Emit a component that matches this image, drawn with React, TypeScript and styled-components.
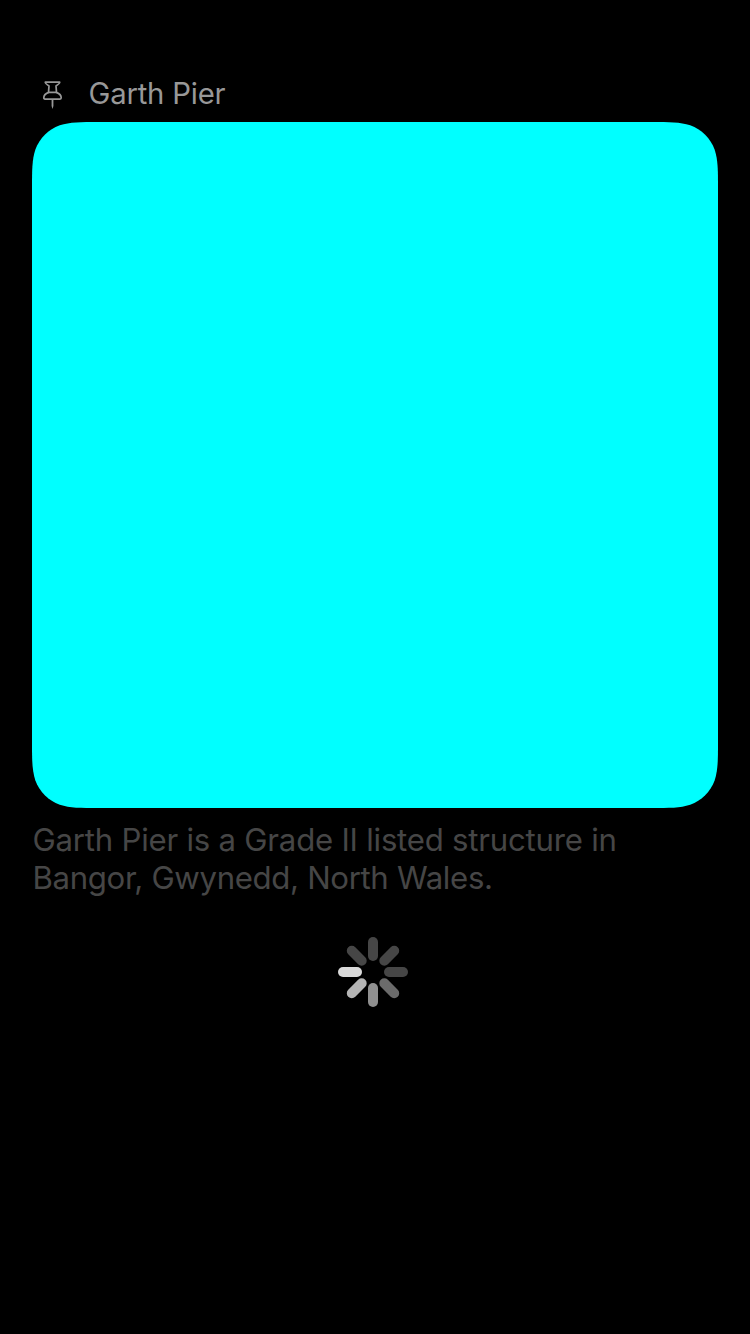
import React from "react";
import styled, { createGlobalStyle } from "styled-components";

const GlobalStyle = createGlobalStyle`
  * { box-sizing: border-box; }
  html, body { margin: 0; background: #000; }
`;

const Screen = styled.main`
  display: flex;
  flex-direction: column;
  width: 750px;
  height: 1334px;
  padding: 72px 32px 0;
  background: #000;
  font-family: Inter, "Liberation Sans", sans-serif;
  overflow: hidden;
`;

const Header = styled.header`
  display: flex;
  align-items: center;
  height: 42px;
  padding-left: 10px;
  gap: 24.5px;
  color: #989898;
`;

const PinIcon = styled.svg`
  width: 22px;
  height: 30px;
  margin-top: 3px;
  fill: none;
  stroke: currentColor;
  stroke-width: 1.7;
  stroke-linecap: round;
  stroke-linejoin: round;
`;

const Title = styled.h1`
  margin: 1px 0 0;
  font-size: 29.3px;
  font-weight: 400;
  line-height: 36px;
  letter-spacing: -0.2px;
`;

const Card = styled.div`
  flex: none;
  width: 686px;
  height: 686px;
  margin-top: 8px;
  background: #00ffff;
  clip-path: path("${({ $radius }: { $radius: number }) => squircle(686, $radius)}");
`;

const Description = styled.p`
  margin: 13px 0 0 0.5px;
  color: #464646;
  font-size: 31.2px;
  line-height: 38px;
  white-space: nowrap;
`;

const Line = styled.span<{ $tracking: number }>`
  display: block;
  letter-spacing: ${({ $tracking }) => $tracking}px;
`;

const Spinner = styled.svg`
  flex: none;
  width: 70px;
  height: 70px;
  margin: 40px 0 0 306px;
`;

// Rounded square whose corners ease gradually into the straight edges.
function squircle(size: number, r: number) {
  const a = 1.5287 * r;
  const b = 1.0885 * r;
  const c = 0.8684 * r;
  const d = 0.6315 * r;
  const e = 0.3728 * r;
  const f = 0.1691 * r;
  const g = 0.0749 * r;
  const s = size;
  return [
    `M${a} 0H${s - a}`,
    `C${s - b} 0 ${s - c} 0 ${s - d} ${g}`,
    `C${s - e} ${f} ${s - f} ${e} ${s - g} ${d}`,
    `C${s} ${c} ${s} ${b} ${s} ${a}V${s - a}`,
    `C${s} ${s - b} ${s} ${s - c} ${s - g} ${s - d}`,
    `C${s - f} ${s - e} ${s - e} ${s - f} ${s - d} ${s - g}`,
    `C${s - c} ${s} ${s - b} ${s} ${s - a} ${s}H${a}`,
    `C${b} ${s} ${c} ${s} ${d} ${s - g}`,
    `C${e} ${s - f} ${f} ${s - e} ${g} ${s - d}`,
    `C0 ${s - c} 0 ${s - b} 0 ${s - a}V${a}`,
    `C0 ${b} 0 ${c} ${g} ${d}`,
    `C${f} ${e} ${e} ${f} ${d} ${g}`,
    `C${c} 0 ${b} 0 ${a} 0Z`,
  ].join("");
}

// Clockwise from the top.
const spokes = ["#464646", "#464646", "#464646", "#6b6b6b", "#909090", "#b5b5b5", "#dadada", "#464646"];

export default function App() {
  return (
    <>
      <GlobalStyle />
      <Screen>
        <Header>
          <PinIcon viewBox="0 0 22 30" aria-hidden="true">
            <path d="M3.3 2.2H17.7C18.2 3.3 15.8 4.8 14 5.9L14.5 12.4C17.3 13.5 19.2 15.6 19.2 17.8Q19.2 19.1 18 19.1H3Q1.8 19.1 1.8 17.8C1.8 15.6 3.7 13.5 6.5 12.4L7 5.9C5.2 4.8 2.8 3.3 3.3 2.2Z" />
            <path d="M6.5 12.4H14.5" />
            <path d="M9.6 19H11.4V26L10.5 29L9.6 26Z" fill="currentColor" stroke="none" />
          </PinIcon>
          <Title>Garth Pier</Title>
        </Header>
        <Card $radius={44} />
        <Description>
          <Line $tracking={-0.24}>Garth Pier is a Grade II listed structure in</Line>
          <Line $tracking={-0.35}>Bangor, Gwynedd, North Wales.</Line>
        </Description>
        <Spinner viewBox="0 0 70 70" role="progressbar" aria-label="Loading">
          {spokes.map((color, i) => (
            <rect key={i} x="30" y="0" width="10" height="24" rx="5" fill={color} transform={`rotate(${i * 45} 35 35)`} />
          ))}
        </Spinner>
      </Screen>
    </>
  );
}
